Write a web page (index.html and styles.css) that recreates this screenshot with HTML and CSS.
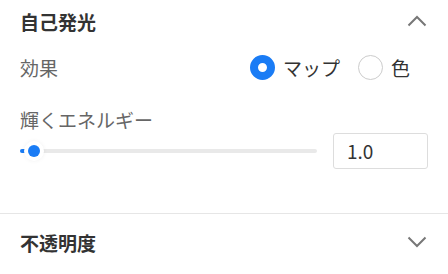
FILE: index.html
```html
<!DOCTYPE html>
<html lang="ja">
<head>
<meta charset="utf-8">
<link rel="stylesheet" href="styles.css">
</head>
<body>
<div class="panel">
  <section class="section open">
    <div class="section-head">
      <span class="section-title">自己発光</span>
      <svg class="chev" width="20" height="12" viewBox="0 0 20 12"><path d="M1.5 10.5 L10 2 L18.5 10.5" fill="none" stroke="#777" stroke-width="2"/></svg>
    </div>
    <div class="row effect">
      <span class="label">効果</span>
      <div class="radios">
        <label class="radio"><span class="dot on"></span><span class="rtext">マップ</span></label>
        <label class="radio"><span class="dot"></span><span class="rtext">色</span></label>
      </div>
    </div>
    <div class="label energy">輝くエネルギー</div>
    <div class="row slider-row">
      <div class="slider">
        <div class="track"><div class="fill" style="width:14px"></div></div>
        <div class="thumb" style="left:8px"></div>
      </div>
      <div class="num">1.0</div>
    </div>
  </section>
  <section class="section closed">
    <div class="section-head">
      <span class="section-title">不透明度</span>
      <svg class="chev" width="20" height="12" viewBox="0 0 20 12"><path d="M1.5 1.5 L10 10 L18.5 1.5" fill="none" stroke="#777" stroke-width="2"/></svg>
    </div>
  </section>
</div>
</body>
</html>
```
FILE: styles.css
```css
html, body { margin: 0; padding: 0; background: #fff; }
body {
  font-family: "Noto Sans CJK JP", "Noto Sans", sans-serif;
  color: #333;
  width: 448px;
  height: 274px;
  overflow: hidden;
}
.panel { display: flex; flex-direction: column; }
.section.open { border-bottom: 1px solid #e6e6e6; padding-bottom: 44px; }
.section-head {
  display: flex;
  align-items: center;
  justify-content: space-between;
  padding: 0 21px 0 20px;
  height: 42px;
}
.section-title { font-size: 19px; font-weight: 700; color: #333; line-height: 1; }
.closed .section-head { height: 56px; }
.row { display: flex; align-items: center; justify-content: space-between; padding: 0 20px; }
.label { font-size: 19px; color: #666; line-height: 1; }
.effect { height: 50px; }
.radios { display: flex; align-items: center; gap: 18px; padding-right: 18px; }
.radio { display: flex; align-items: center; gap: 8px; }
.dot {
  width: 25px; height: 25px; box-sizing: border-box;
  border-radius: 50%; border: 1px solid #ccc; background: #fff;
}
.dot.on { border: 8.5px solid #1a7cf5; }
.rtext { font-size: 19px; color: #333; line-height: 1; }
.energy { padding: 0 20px; margin-top: 18px; height: 20px; }
.slider-row { height: 36px; margin-top: 3px; }
.slider { position: relative; width: 297px; height: 16px; display: flex; align-items: center; }
.track { width: 100%; height: 4px; background: #e9e9e9; border-radius: 2px; }
.fill { height: 100%; background: #1a7cf5; border-radius: 2px 0 0 2px; }
.thumb {
  position: absolute; top: 2px; width: 12px; height: 12px; border-radius: 50%;
  background: #1a7cf5; box-shadow: 0 0 0 4px #fff, 0 0 4px 4px rgba(0,0,0,0.06);
}
.num {
  width: 95px; height: 36px; box-sizing: border-box;
  border: 1px solid #ddd; border-radius: 3px;
  font-size: 19px; color: #333; line-height: 34px; padding-left: 13px;
}
```
